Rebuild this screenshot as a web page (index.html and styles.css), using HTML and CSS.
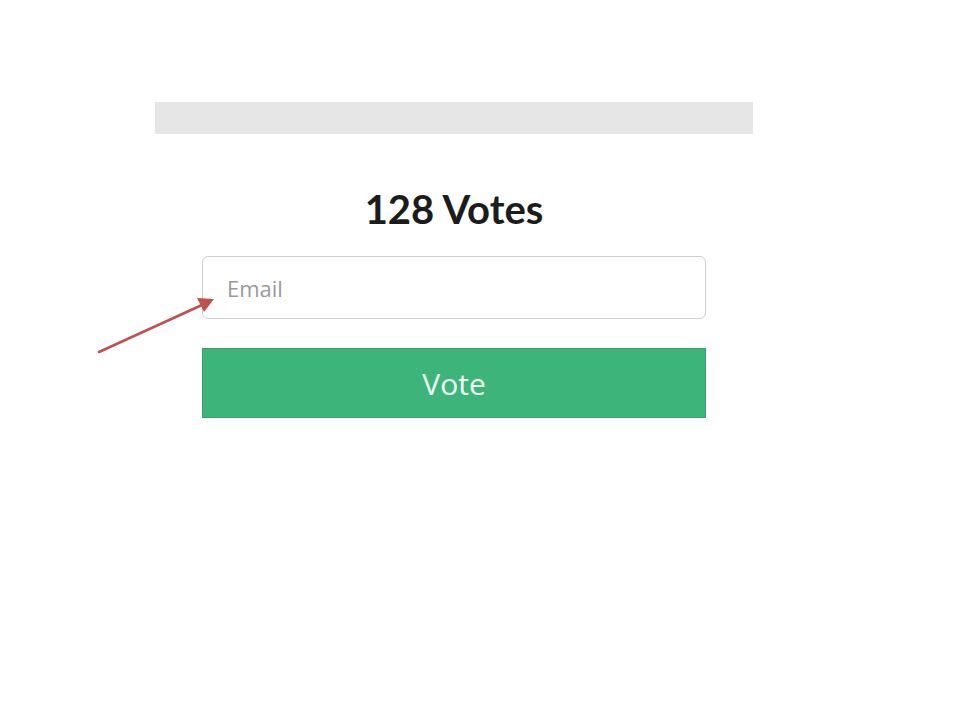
FILE: index.html
```html
<!DOCTYPE html>
<html>
<head>
<meta charset="utf-8">
<link rel="stylesheet" href="styles.css">
</head>
<body>
<div class="page">
  <div class="panel">
    <div class="topbar"></div>
    <div class="form">
      <h1 class="count">128 Votes</h1>
      <div class="field"><span class="placeholder">Email</span></div>
      <button class="vote">Vote</button>
    </div>
  </div>
  <svg class="arrow" width="960" height="720" viewBox="0 0 960 720">
    <line x1="99" y1="352" x2="202" y2="305" stroke="#c0504d" stroke-width="2.5" stroke-linecap="round"/>
    <polygon points="214,299 197,298 204,312" fill="#c0504d"/>
  </svg>
</div>
</body>
</html>
```
FILE: styles.css
```css
html, body {
  margin: 0;
  padding: 0;
  background: #ffffff;
}
.page {
  position: relative;
  width: 960px;
  height: 720px;
  overflow: hidden;
}
.panel {
  margin-left: 155px;
  padding-top: 102px;
  width: 598px;
}
.topbar {
  height: 32px;
  background: #e6e6e6;
}
.form {
  display: flex;
  flex-direction: column;
  align-items: center;
  padding-top: 50px;
}
.count {
  margin: 0;
  font-family: Lato, "Liberation Sans", sans-serif;
  font-weight: 700;
  font-size: 40px;
  line-height: 50px;
  color: #1c1c1c;
}
.field {
  box-sizing: border-box;
  margin-top: 22px;
  width: 504px;
  height: 63px;
  border: 1.5px solid #cfcfcf;
  border-radius: 6px;
  display: flex;
  align-items: center;
  padding-left: 24px;
}
.placeholder {
  font-family: "Open Sans", "Liberation Sans", sans-serif;
  font-size: 22px;
  color: #9a9a9a;
}
.vote {
  margin-top: 29px;
  width: 504px;
  height: 70px;
  border: 1px solid #37a26d;
  background: #3db57a;
  color: #f1fff6;
  font-family: "Open Sans", "Liberation Sans", sans-serif;
  font-size: 30px;
  padding: 0;
  border-radius: 0;
}
.arrow {
  position: absolute;
  left: 0;
  top: 0;
  pointer-events: none;
}
```
